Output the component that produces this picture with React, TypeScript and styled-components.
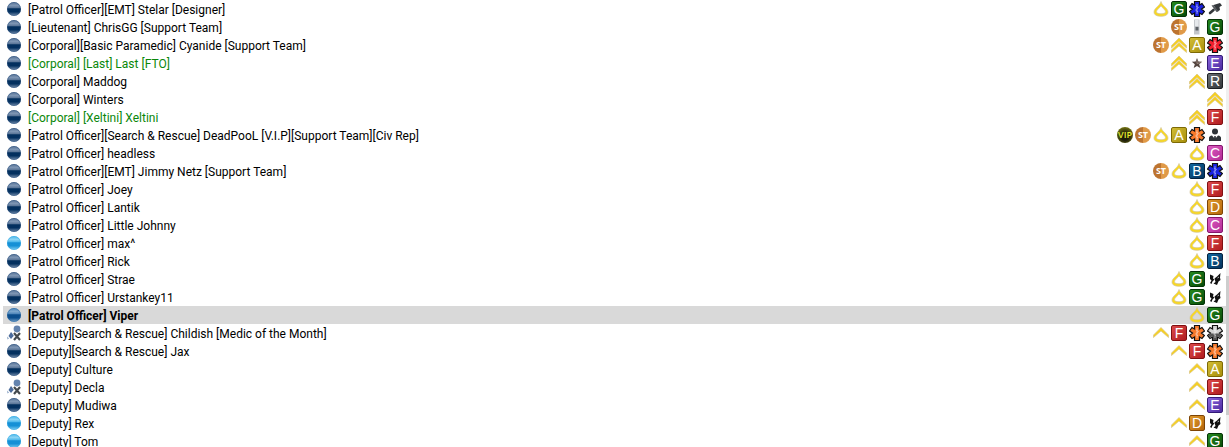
import React from "react";
import styled, { createGlobalStyle } from "styled-components";

const GlobalStyle = createGlobalStyle`
  * { box-sizing: border-box; }
  body { margin: 0; background: #fff; overflow: hidden; }
`;

const Layout = styled.main`
  display: flex;
  height: 100vh;
  overflow: hidden;
`;

const UserList = styled.ul`
  flex: 1;
  min-width: 0;
  margin: 0;
  padding: 0 0 0 3px;
  list-style: none;
  font-family: Roboto, "Noto Sans", sans-serif;
  font-size: 12px;
  line-height: 18px;
  color: #000;
`;

const Row = styled.li<{ $selected?: boolean }>`
  display: flex;
  align-items: center;
  height: 18px;
  padding: 0 3px;
  background: ${(p) => (p.$selected ? "#d9d9d9" : "transparent")};
  font-weight: ${(p) => (p.$selected ? 700 : 400)};
`;

const Name = styled.span<{ $friend?: boolean }>`
  flex: 1;
  min-width: 0;
  margin-left: 6px;
  padding-top: 2px;
  white-space: nowrap;
  color: ${(p) => (p.$friend ? "#0a870a" : "inherit")};
`;

const Badges = styled.span`
  display: flex;
  gap: 2px;
`;

const Icon = styled.svg`
  display: block;
  flex: none;
  width: 16px;
  height: 16px;
`;

const unitColors = {
  A: ["#d2bc35", "#a8900c", "#7d6a05"],
  B: ["#11679f", "#03315b", "#02223f"],
  C: ["#dc5cc0", "#b32c97", "#84156c"],
  D: ["#e09a2c", "#b4660c", "#7d4405"],
  E: ["#8a64dc", "#4c2ba0", "#321a78"],
  F: ["#dc4a4a", "#b01c1f", "#801012"],
  G: ["#258a1d", "#064a08", "#033305"],
  R: ["#6a6e72", "#33373b", "#1d2023"],
} as const;
type Unit = keyof typeof unitColors;

const UnitTile = styled.span<{ $unit: Unit }>`
  flex: none;
  width: 16px;
  height: 16px;
  border: 1px solid ${(p) => unitColors[p.$unit][2]};
  border-radius: 2px;
  background: linear-gradient(
    135deg,
    ${(p) => unitColors[p.$unit][0]},
    ${(p) => unitColors[p.$unit][1]}
  );
  color: #fff;
  font: 400 14px/14px "Liberation Sans", sans-serif;
  text-align: center;
`;

const TextDisc = styled.span<{ $vip?: boolean }>`
  display: flex;
  flex: none;
  align-items: center;
  justify-content: center;
  width: 16px;
  height: 16px;
  border-radius: 50%;
  background: ${(p) =>
    p.$vip
      ? "radial-gradient(circle at 50% 60%, #1c1c0a 30%, #8c8c14 90%)"
      : "linear-gradient(90deg, #bd7430 50%, #e09a48 50%)"};
  color: ${(p) => (p.$vip ? "#e6ec2e" : "#fff")};
  font: ${(p) => (p.$vip ? 600 : 700)} 9px/16px "Open Sans", sans-serif;
`;

type Status = "idle" | "talk" | "self" | "away";

const orbs = {
  idle: ["#5a7597", "#03305f", "#2a4f7d", "#7d95b3"],
  talk: ["#4fb9ec", "#1590d6", "#35aae4", "#8ad4f4"],
  self: ["#4f86ba", "#0b4d8c", "#2768a4", "#7ba6cd"],
};

function StatusIcon({ status }: { status: Status }) {
  if (status === "away") {
    return (
      <Icon viewBox="0 0 16 16" role="img" aria-label="Muted">
        <circle cx="11" cy="4" r="3.400" fill="#6383ae" />
        <path d="M5 7L8 10.500L5 14L2.500 11Z" fill="#4c6c9c" />
        <path d="M1 11.500L3 13.500L1.500 14.500Z" fill="#8aa4c4" />
        <path d="M8 8L14 15M14 8L8 15" stroke="#fff" strokeWidth="3.600" />
        <path d="M8 8L14 15M14 8L8 15" stroke="#444a4e" strokeWidth="2.200" />
      </Icon>
    );
  }
  const [top, mid, low, rim] = orbs[status];
  return (
    <Icon viewBox="0 0 16 16" role="img" aria-label={status}>
      <defs>
        <linearGradient id={"orb-" + status} x1="0" y1="0" x2="0" y2="1">
          <stop offset="0" stopColor={top} />
          <stop offset="0.250" stopColor={rim} />
          <stop offset="0.420" stopColor={top} />
          <stop offset="0.480" stopColor={mid} />
          <stop offset="0.700" stopColor={mid} />
          <stop offset="1" stopColor={rim} />
        </linearGradient>
      </defs>
      <circle cx="8" cy="8" r="7" fill={"url(#orb-" + status + ")"} />
      <circle cx="8" cy="8" r="6.500" fill="none" stroke={low} strokeOpacity="0.500" />
    </Icon>
  );
}

const starColors = {
  emt: "#1a22e0",
  medic: "#f2202e",
  rescue: "#f77a2c",
  month: "#d4d4d4",
};
type Star = keyof typeof starColors;

const starPath =
  "M5.500 0.500H10.500V4L13 2.500L15.500 6L12.500 8L15.500 10.500L13 13.500L10.500 12V15.500H5.500V12L3 13.500L0.500 10.500L3.500 8L0.500 6L3 2.500L5.500 4Z";

function StarOfLife({ kind }: { kind: Star }) {
  return (
    <Icon viewBox="0 0 16 16" role="img" aria-label={kind}>
      <path d={starPath} fill={starColors[kind]} stroke="#111" strokeWidth="1.200" />
      {kind === "month" && <path d="M4 8.500H12L14.500 10.500L13 12.500L10 11V15H6V11L3 12.500L1.500 10.500Z" fill="#555" />}
      <path d="M8 3V13" stroke="#fff" strokeOpacity="0.500" strokeWidth="1" />
      <path d="M7 5L9.500 6.500L6.500 9L9 11" fill="none" stroke="#fff" strokeOpacity="0.500" strokeWidth="0.800" />
    </Icon>
  );
}

const dropOuter =
  "M8 0.500C8.800 4.500 15 7 15 11C15 14 12 15.300 8 15.300S1 14 1 11C1 7 7.200 4.500 8 0.500Z";
const dropInner =
  "M8 4.800C9 7 12.500 8.500 12.500 10.800C12.500 12.300 10.500 12.700 8 12.700S3.500 12.300 3.500 10.800C3.500 8.500 7 7 8 4.800Z";

function Drop() {
  return (
    <Icon viewBox="0 0 16 16" role="img" aria-label="Patrol Officer">
      <path
        d={dropOuter + dropInner}
        fill="#f8d822"
        fillRule="evenodd"
        stroke="#d3c49c"
        strokeWidth="0.700"
      />
    </Icon>
  );
}

const wing = (y: number) =>
  `M8 ${y}L15.500 ${y + 7.5}V${y + 10}L8 ${y + 3.5}L0.500 ${y + 10}V${y + 7.5}Z`;

function Chevrons({ double }: { double?: boolean }) {
  const tops = double ? [1, 5.5] : [2.5];
  return (
    <Icon viewBox="0 0 16 16" role="img" aria-label={double ? "Corporal" : "Deputy"}>
      {tops.map((y) => (
        <path key={y} d={wing(y)} fill="#f6d021" stroke="#d9c48a" strokeWidth="0.700" />
      ))}
    </Icon>
  );
}

function Bar() {
  return (
    <Icon viewBox="0 0 16 16" role="img" aria-label="Lieutenant">
      <path d="M5 0.500H10.500V15.500H5Z" fill="#c3c6ca" />
      <path d="M6 1H9.500V7H6Z" fill="#e6e9ec" />
      <path d="M6.500 8H9.500V11.500H6.500Z" fill="#5d6268" />
    </Icon>
  );
}

function SmallStar() {
  return (
    <Icon viewBox="0 0 16 16" role="img" aria-label="FTO">
      <path
        d="M8 3L9.400 6.600L13.200 6.800L10.200 9.200L11.300 13L8 10.900L4.700 13L5.800 9.200L2.800 6.800L6.600 6.600Z"
        fill="#54453f"
      />
      <path d="M8 5V8.500L11.500 7.500" fill="none" stroke="#a8948a" strokeWidth="0.800" />
    </Icon>
  );
}

function Brush() {
  return (
    <Icon viewBox="0 0 16 16" role="img" aria-label="Designer">
      <path d="M6.500 4L13 2L15 4.500L12.500 6L13 9L10.500 10.500Z" fill="#33373b" />
      <path d="M4.500 4.500L6.500 4L11.500 10.500L9.500 11Z" fill="#55595d" />
      <path d="M6.500 9L3 12" stroke="#33373b" strokeWidth="2.600" strokeLinecap="round" />
    </Icon>
  );
}

function Person() {
  return (
    <Icon viewBox="0 0 16 16" role="img" aria-label="Civ Rep">
      <circle cx="8" cy="4.500" r="3" fill="#2e3338" />
      <path d="M2 14V11Q2 9 5 8.500L8 12L11 8.500Q14 9 14 11V14Z" fill="#2e3338" />
      <path d="M7.300 9H8.700L9 11.500L8 13L7 11.500Z" fill="#2e3338" />
    </Icon>
  );
}

function Theater() {
  return (
    <Icon viewBox="0 0 16 16" role="img" aria-label="K9">
      <path d="M3 3.500L6.500 5L6 7.500L7.500 8.500L5.500 10.500L4.500 13L3 12L4.500 9.500L3 8Z" fill="#111" />
      <path d="M13.500 2L13 6.500L13.500 9L11.500 10.500L10 14L6.500 12.500L8.500 11L7.500 7.500L10 5.500Z" fill="#111" />
      <path d="M10.500 7L12 6" stroke="#fff" strokeWidth="0.700" />
    </Icon>
  );
}

type BadgeId =
  | Unit | Star
  | "st" | "vip" | "drop" | "corporal" | "deputy" | "bar" | "fto" | "brush" | "person" | "k9";

function Badge({ id }: { id: BadgeId }) {
  switch (id) {
    case "st": return <TextDisc>ST</TextDisc>;
    case "vip": return <TextDisc $vip>VIP</TextDisc>;
    case "drop": return <Drop />;
    case "corporal": return <Chevrons double />;
    case "deputy": return <Chevrons />;
    case "bar": return <Bar />;
    case "fto": return <SmallStar />;
    case "brush": return <Brush />;
    case "person": return <Person />;
    case "k9": return <Theater />;
    case "emt":
    case "medic":
    case "rescue":
    case "month": return <StarOfLife kind={id} />;
    default: return <UnitTile $unit={id}>{id}</UnitTile>;
  }
}

const Track = styled.div`
  display: flex;
  flex-direction: column;
  width: 3px;
  background: #f0f0f0;
`;
const Thumb = styled.div`
  height: 31%;
  margin-top: 276px;
  background: #cdcdcd;
`;

interface User { name: string; badges: BadgeId[]; status?: Status; friend?: boolean; selected?: boolean }

const users: User[] = [
  { name: "[Patrol Officer][EMT] Stelar [Designer]", badges: ["drop", "G", "emt", "brush"] },
  { name: "[Lieutenant] ChrisGG [Support Team]", badges: ["st", "bar", "G"] },
  { name: "[Corporal][Basic Paramedic] Cyanide [Support Team]", badges: ["st", "corporal", "A", "medic"] },
  { name: "[Corporal] [Last] Last [FTO]", badges: ["corporal", "fto", "E"], friend: true },
  { name: "[Corporal] Maddog", badges: ["corporal", "R"] },
  { name: "[Corporal] Winters", badges: ["corporal"] },
  { name: "[Corporal] [Xeltini] Xeltini", badges: ["corporal", "F"], friend: true },
  { name: "[Patrol Officer][Search & Rescue] DeadPooL [V.I.P][Support Team][Civ Rep]", badges: ["vip", "st", "drop", "A", "rescue", "person"] },
  { name: "[Patrol Officer] headless", badges: ["drop", "C"] },
  { name: "[Patrol Officer][EMT] Jimmy Netz [Support Team]", badges: ["st", "drop", "B", "emt"] },
  { name: "[Patrol Officer] Joey", badges: ["drop", "F"] },
  { name: "[Patrol Officer] Lantik", badges: ["drop", "D"] },
  { name: "[Patrol Officer] Little Johnny", badges: ["drop", "C"] },
  { name: "[Patrol Officer] max^", badges: ["drop", "F"], status: "talk" },
  { name: "[Patrol Officer] Rick", badges: ["drop", "B"] },
  { name: "[Patrol Officer] Strae", badges: ["drop", "G", "k9"] },
  { name: "[Patrol Officer] Urstankey11", badges: ["drop", "G", "k9"] },
  { name: "[Patrol Officer] Viper", badges: ["drop", "G"], status: "self", selected: true },
  { name: "[Deputy][Search & Rescue] Childish [Medic of the Month]", badges: ["deputy", "F", "rescue", "month"], status: "away" },
  { name: "[Deputy][Search & Rescue] Jax", badges: ["deputy", "F", "rescue"] },
  { name: "[Deputy] Culture", badges: ["deputy", "A"] },
  { name: "[Deputy] Decla", badges: ["deputy", "F"], status: "away" },
  { name: "[Deputy] Mudiwa", badges: ["deputy", "E"] },
  { name: "[Deputy] Rex", badges: ["deputy", "D", "k9"], status: "talk" },
  { name: "[Deputy] Tom", badges: ["deputy", "G"], status: "talk" },
];

export default function App() {
  return (
    <Layout>
      <GlobalStyle />
      <UserList>
        {users.map((u) => (
          <Row key={u.name} $selected={u.selected}>
            <StatusIcon status={u.status ?? "idle"} />
            <Name $friend={u.friend}>{u.name}</Name>
            <Badges>
              {u.badges.map((b) => <Badge key={b} id={b} />)}
            </Badges>
          </Row>
        ))}
      </UserList>
      <Track>
        <Thumb />
      </Track>
    </Layout>
  );
}
